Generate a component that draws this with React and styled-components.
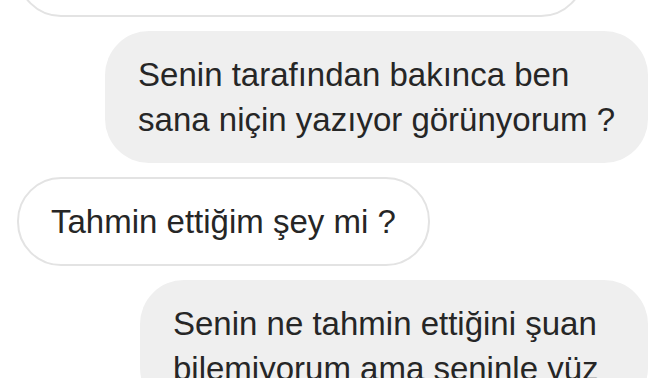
import React from "react";
import styled, { createGlobalStyle } from "styled-components";

const messages = [
  { id: 1, mine: false, lines: [], width: 568, height: 90 },
  {
    id: 2,
    mine: true,
    lines: ["Senin tarafından bakınca ben", "sana niçin yazıyor görünyorum ?"],
  },
  { id: 3, mine: false, lines: ["Tahmin ettiğim şey mi ?"] },
  {
    id: 4,
    mine: true,
    width: 508,
    lines: ["Senin ne tahmin ettiğini şuan", "bilemiyorum ama seninle yüz"],
  },
];

const App = () => {
  return (
    <>
      <Global />
      <Screen>
        <Thread>
          {messages.map((m) => (
            <Row key={m.id} $mine={m.mine}>
              <Bubble $mine={m.mine} $width={m.width} $height={m.height}>
                {m.lines.map((line) => (
                  <Line key={line}>{line}</Line>
                ))}
              </Bubble>
            </Row>
          ))}
        </Thread>
      </Screen>
    </>
  );
};

const Global = createGlobalStyle`
  html, body {
    margin: 0;
    padding: 0;
    background: #fff;
  }
  body {
    font-family: "Liberation Sans", Arial, sans-serif;
    color: #262626;
  }
`;

const Screen = styled.div`
  width: 672px;
  height: 378px;
  overflow: hidden;
`;

/* chat is scrolled: first bubble sits mostly above the fold */
const Thread = styled.div`
  display: flex;
  flex-direction: column;
  gap: 14px;
  margin-top: -73px;
  padding: 0 24px 0 17px;
`;

const Row = styled.div`
  display: flex;
  justify-content: ${(p) => (p.$mine ? "flex-end" : "flex-start")};
`;

const Bubble = styled.div`
  box-sizing: border-box;
  border-radius: 44px;
  font-size: 33px;
  line-height: 45px;
  white-space: nowrap;
  background: ${(p) => (p.$mine ? "#efefef" : "#fff")};
  border: ${(p) => (p.$mine ? "none" : "2px solid #e3e3e3")};
  padding: ${(p) => (p.$mine ? "21px 33px" : "20px 32px")};
  ${(p) => p.$width && `width: ${p.$width}px;`}
  ${(p) => p.$height && `height: ${p.$height}px;`}
`;

const Line = styled.div``;

export default App;
